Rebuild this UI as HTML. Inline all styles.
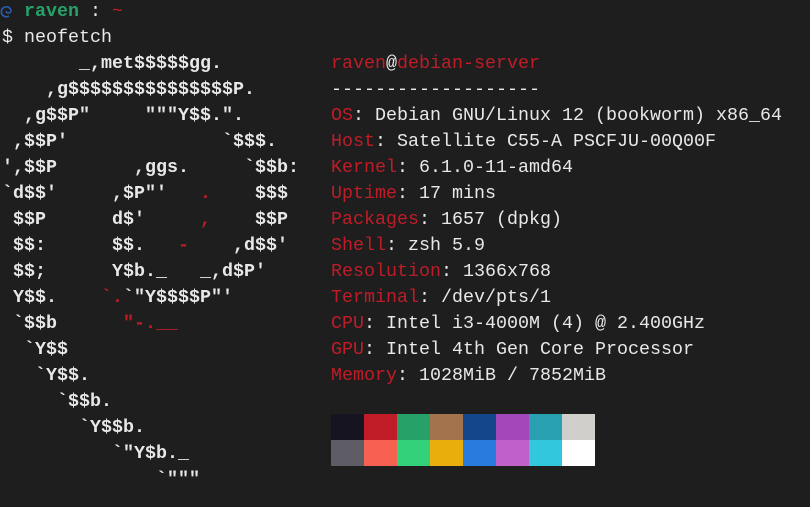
<!DOCTYPE html>
<html><head><meta charset="utf-8"><style>
html,body{margin:0;padding:0;background:#1e1e1e;width:810px;height:507px;overflow:hidden}
body{font-family:"Liberation Mono",monospace;font-size:18.33px;color:#e8e8e8;position:relative}
pre{margin:0;font:inherit;line-height:26px;position:absolute;white-space:pre}
.r{color:#c01c28}.g{color:#26a269}.b{font-weight:bold}
.pal{position:absolute;left:331px;top:414px;display:grid;grid-template-columns:repeat(8,33px);grid-template-rows:26px 26px}
</style></head><body>
<svg style="position:absolute;left:0;top:4px" width="14" height="16" viewBox="0 0 14 16"><path d="M9 12 A5 5 0 1 1 11 6 A2.5 2.5 0 0 1 6 7" fill="none" stroke="#2a5db0" stroke-width="1.6"/></svg>
<pre style="left:2px;top:-1px"><span>  </span><span class="g b">raven</span> : <span class="r">~</span>
$ neofetch</pre>
<pre class="b" style="left:2px;top:51px">       _,met$$$$$gg.
    ,g$$$$$$$$$$$$$$$P.
  ,g$$P"     """Y$$.".
 ,$$P'              `$$$.
',$$P       ,ggs.     `$$b:
`d$$'     ,$P"'   <span class="r">.</span>    $$$
 $$P      d$'     <span class="r">,</span>    $$P
 $$:      $$.   <span class="r">-</span>    ,d$$'
 $$;      Y$b._   _,d$P'
 Y$$.    <span class="r">`.</span>`"Y$$$$P"'
 `$$b      <span class="r">"-.__</span>
  `Y$$
   `Y$$.
     `$$b.
       `Y$$b.
          `"Y$b._
              `"""</pre>
<pre style="left:331px;top:51px"><span class="r">raven</span>@<span class="r">debian-server</span>
<span>-------------------</span>
<span class="r">OS</span>: Debian GNU/Linux 12 (bookworm) x86_64
<span class="r">Host</span>: Satellite C55-A PSCFJU-00Q00F
<span class="r">Kernel</span>: 6.1.0-11-amd64
<span class="r">Uptime</span>: 17 mins
<span class="r">Packages</span>: 1657 (dpkg)
<span class="r">Shell</span>: zsh 5.9
<span class="r">Resolution</span>: 1366x768
<span class="r">Terminal</span>: /dev/pts/1
<span class="r">CPU</span>: Intel i3-4000M (4) @ 2.400GHz
<span class="r">GPU</span>: Intel 4th Gen Core Processor
<span class="r">Memory</span>: 1028MiB / 7852MiB</pre>
<div class="pal">
<div style="background:#171421"></div><div style="background:#c01c28"></div><div style="background:#26a269"></div><div style="background:#a2734c"></div><div style="background:#12488b"></div><div style="background:#a347ba"></div><div style="background:#2aa1b3"></div><div style="background:#d0cfcc"></div>
<div style="background:#5e5c64"></div><div style="background:#f66151"></div><div style="background:#33d17a"></div><div style="background:#e9ad0c"></div><div style="background:#2a7bde"></div><div style="background:#c061cb"></div><div style="background:#33c7de"></div><div style="background:#ffffff"></div>
</div>
</body></html>
